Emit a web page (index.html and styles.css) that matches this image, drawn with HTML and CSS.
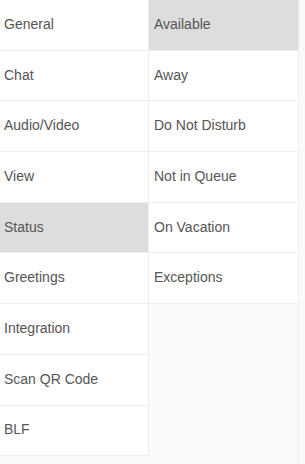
FILE: index.html
```html
<!DOCTYPE html>
<html lang="en">
<head>
    <meta charset="UTF-8">
    <meta name="viewport" content="width=device-width, initial-scale=1.0">
    <title>Settings</title>
    <link rel="stylesheet" href="styles.css">
</head>
<body>
    <div class="settings">
        <ul class="menu">
            <li>General</li>
            <li>Chat</li>
            <li>Audio/Video</li>
            <li>View</li>
            <li class="active">Status</li>
            <li>Greetings</li>
            <li>Integration</li>
            <li>Scan QR Code</li>
            <li>BLF</li>
        </ul>
        <ul class="menu submenu">
            <li class="active">Available</li>
            <li>Away</li>
            <li>Do Not Disturb</li>
            <li>Not in Queue</li>
            <li>On Vacation</li>
            <li>Exceptions</li>
        </ul>
    </div>
</body>
</html>
```

FILE: styles.css
```css
body {
    font-family: "Liberation Sans", Arial, sans-serif;
    font-size: 14px;
    color: #555;
    margin: 0;
    padding: 0;
    background-color: #fafafa;
}
.settings {
    display: flex;
    align-items: flex-start;
}
.menu {
    list-style: none;
    margin: 0;
    padding: 0;
    width: 148px;
    background: white;
    border-right: 1px solid #eee;
}
.menu li {
    box-sizing: border-box;
    height: 50.7px;
    display: flex;
    align-items: center;
    padding-left: 4px;
    padding-bottom: 2px;
    border-bottom: 1px solid #eee;
}
.menu li.active {
    background-color: #ddd;
}
.submenu {
    width: 149px;
    min-height: 100vh;
    background: transparent;
}
.submenu li {
    background: white;
    padding-left: 5px;
}
```
